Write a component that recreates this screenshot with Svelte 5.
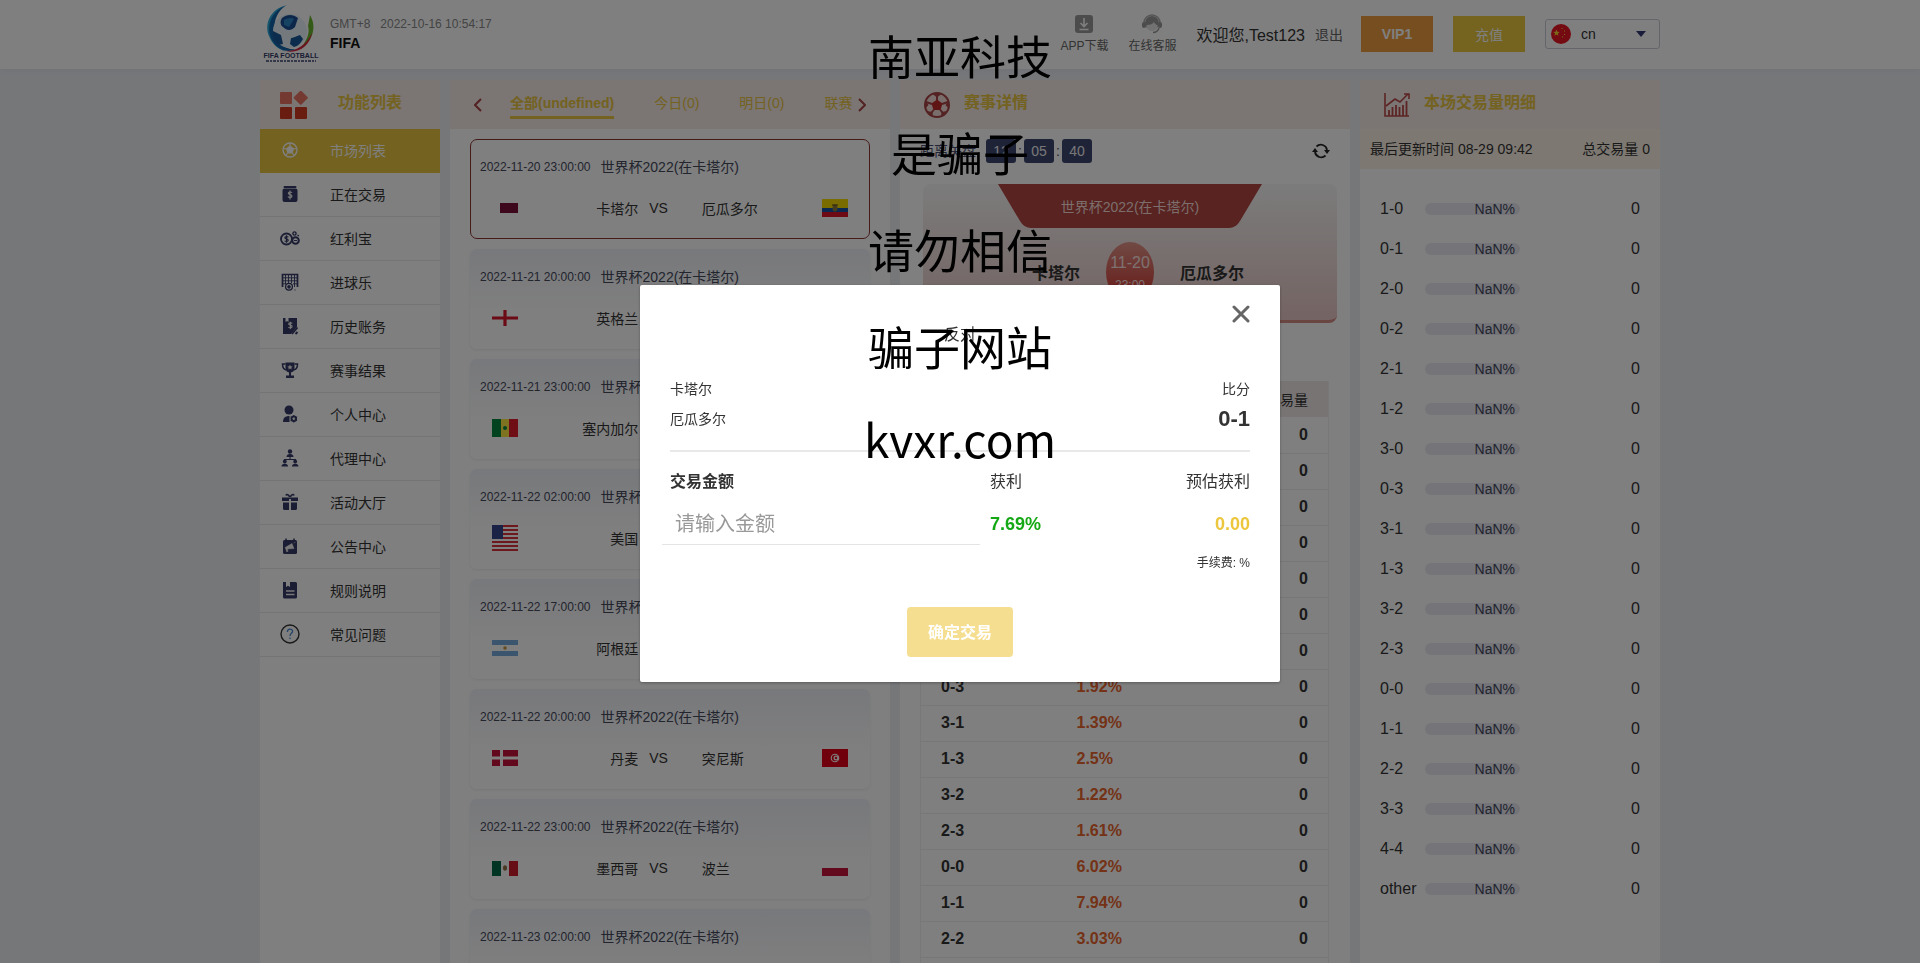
<script>
    const menu = [
        { name: "市场列表", icon: "ball" },
        { name: "正在交易", icon: "trade" },
        { name: "红利宝", icon: "coins" },
        { name: "进球乐", icon: "goal" },
        { name: "历史账务", icon: "history" },
        { name: "赛事结果", icon: "cup" },
        { name: "个人中心", icon: "user" },
        { name: "代理中心", icon: "agent" },
        { name: "活动大厅", icon: "gift" },
        { name: "公告中心", icon: "notice" },
        { name: "规则说明", icon: "rules" },
        { name: "常见问题", icon: "help" },
    ];

    const tabs = ["全部(undefined)", "今日(0)", "明日(0)", "联赛"];
    const league = "世界杯2022(在卡塔尔)";

    const matches = [
        { time: "2022-11-20 23:00:00", home: "卡塔尔", away: "厄瓜多尔", flags: ["qa", "ec"] },
        { time: "2022-11-21 20:00:00", home: "英格兰", away: "伊朗", flags: ["en", "ir"] },
        { time: "2022-11-21 23:00:00", home: "塞内加尔", away: "荷兰", flags: ["sn", "nl"] },
        { time: "2022-11-22 02:00:00", home: "美国", away: "威尔士", flags: ["us", "pl"] },
        { time: "2022-11-22 17:00:00", home: "阿根廷", away: "沙特阿拉伯", flags: ["ar", "ir"] },
        { time: "2022-11-22 20:00:00", home: "丹麦", away: "突尼斯", flags: ["dk", "tn"] },
        { time: "2022-11-22 23:00:00", home: "墨西哥", away: "波兰", flags: ["mx", "pl"] },
        { time: "2022-11-23 02:00:00", home: "法国", away: "澳大利亚", flags: ["nl", "en"] },
    ];

    const odds = [
        ["1-0", "7.02%"], ["0-1", "7.69%"], ["2-0", "4.12%"], ["0-2", "4.35%"],
        ["2-1", "3.26%"], ["1-2", "3.44%"], ["3-0", "1.85%"], ["0-3", "1.92%"],
        ["3-1", "1.39%"], ["1-3", "2.5%"], ["3-2", "1.22%"], ["2-3", "1.61%"],
        ["0-0", "6.02%"], ["1-1", "7.94%"], ["2-2", "3.03%"], ["3-3", "1.05%"],
    ];

    const volumes = [
        "1-0", "0-1", "2-0", "0-2", "2-1", "1-2", "3-0", "0-3", "3-1",
        "1-3", "3-2", "2-3", "0-0", "1-1", "2-2", "3-3", "4-4", "other",
    ];

    const countdown = ["12", "05", "40"];

    let amount = "";
</script>

{#snippet icon(name)}
    <svg class="menu-icon" viewBox="0 0 20 20" aria-hidden="true">
        {#if name === "ball"}
            <circle cx="10" cy="10" r="7" fill="none" stroke="currentColor" stroke-width="1.4" />
            <path d="M10 5.6l4 3-1.5 4.8h-5L6 8.600z" fill="currentColor" />
            <path d="M10 3v3M3.500 8.500l3 .5M16.500 8.500l-3 .5M6 15.500l1.500-2.500M14 15.500l-1.500-2.500" stroke="currentColor" stroke-width="1.2" />
        {:else if name === "trade"}
            <rect x="3.500" y="2" width="13" height="2" rx="1" fill="currentColor" />
            <rect x="2.500" y="4.500" width="15" height="13.500" rx="2" fill="currentColor" />
            <path d="M12 8.700c-.5-.9-3.600-1.200-3.700.6 0 1.700 3.700.9 3.600 2.800-.1 1.800-3.200 1.700-3.900.4M10 6.600v8.800" fill="none" stroke="#eee" stroke-width="1.2" />
        {:else if name === "coins"}
            <circle cx="6.500" cy="11" r="5.500" fill="none" stroke="currentColor" stroke-width="1.8" />
            <path d="M8.300 9.300c-.6-1-3.400-1-3.400.4s3.300.9 3.300 2.500-2.800 1.600-3.500.5M6.500 7.300v7.500" fill="none" stroke="currentColor" stroke-width="1.2" />
            <circle cx="15.500" cy="12.500" r="3.300" fill="none" stroke="currentColor" stroke-width="2" />
            <circle cx="14.500" cy="5.500" r="1.600" fill="none" stroke="currentColor" stroke-width="1.4" />
            <path d="M14 12.500h3M17.500 7l1.500 1" stroke="currentColor" stroke-width="1.2" />
        {:else if name === "goal"}
            <path d="M2.500 15V2.500h15V15" fill="none" stroke="currentColor" stroke-width="1.700" />
            <path d="M5.500 3v9M8.500 3v8M11.500 3v8M14.500 3v12M3 5.800h14M3 8.800h14M3 11.800h3M13 11.800h4" stroke="currentColor" stroke-width=".9" />
            <circle cx="9" cy="14.800" r="3.400" fill="none" stroke="currentColor" stroke-width="1.300" />
            <path d="M9 13l1.600 1.200-.6 2H8l-.6-2zM14 18h2" fill="currentColor" stroke="currentColor" stroke-width=".5" />
        {:else if name === "history"}
            <path d="M3 2h2.500v4L7 5l1.500 1V2H17v9l-6 7H3z" fill="currentColor" />
            <path d="M12.200 7.500c-.6-1-3.600-1-3.500.5 0 1.600 3.500.8 3.400 2.600 0 1.700-3 1.500-3.600.4M10.400 5.800V13" fill="none" stroke="#eee" stroke-width="1.200" />
            <path d="M17.500 11.500L12 18M17.500 16l-2 2" stroke="currentColor" stroke-width="1.800" />
        {:else if name === "cup"}
            <path d="M5.500 2.500h9v5.500c0 3-2 4.500-4.500 4.500S5.500 11 5.500 8z" fill="currentColor" />
            <path d="M5.500 4H2.500c0 4 1 5.500 4 6M14.500 4h3c0 4-1 5.500-4 6" fill="none" stroke="currentColor" stroke-width="1.500" />
            <path d="M9 12h2v3.500h3V18H6v-2.500h3z" fill="currentColor" />
            <path d="M10 4.500l.8 1.700 1.800.2-1.300 1.300.3 1.800-1.600-.9-1.600.9.3-1.800-1.300-1.300 1.800-.2z" fill="#eee" />
        {:else if name === "user"}
            <circle cx="9" cy="6" r="4.500" fill="currentColor" />
            <path d="M3 18c0-4 2-6 6.500-6v6z" fill="currentColor" />
            <circle cx="13.800" cy="14.800" r="2.300" fill="none" stroke="currentColor" stroke-width="1.900" />
            <path d="M13.800 11v7.600M10.500 13l6.600 3.700M17.100 13l-6.600 3.700" stroke="currentColor" stroke-width="1" />
            <circle cx="13.800" cy="14.800" r="1.200" fill="#eee" />
        {:else if name === "agent"}
            <circle cx="10" cy="3.500" r="2.200" fill="currentColor" />
            <path d="M6.500 9c0-2 1.500-3 3.500-3s3.500 1 3.500 3z" fill="currentColor" />
            <path d="M10 9v3M4.500 13v-1.500h11V13" fill="none" stroke="currentColor" stroke-width="1.100" />
            <circle cx="4.800" cy="13.500" r="1.900" fill="currentColor" />
            <circle cx="15.200" cy="13.500" r="1.900" fill="currentColor" />
            <path d="M1.500 18.500c0-2 1.300-2.800 3.300-2.800S8 16.500 8 18.500zM12 18.500c0-2 1.300-2.800 3.200-2.800s3.300.8 3.300 2.800z" fill="currentColor" />
        {:else if name === "gift"}
            <path d="M2 5.500h16V9h-7V7H9v2H2zM3 10.500h6V18H4.500Q3 18 3 16.500zM11 10.500h6v6q0 1.500-1.500 1.500H11z" fill="currentColor" />
            <path d="M9.500 5C9 2.500 6.500 2 6 3.500M10.500 5c.5-2.500 3-3 3.500-1.500" fill="none" stroke="currentColor" stroke-width="1.600" />
        {:else if name === "notice"}
            <rect x="3" y="4" width="14" height="14" rx="1.500" fill="currentColor" />
            <path d="M6 2.500v3M14 2.500v3" stroke="currentColor" stroke-width="1.500" />
            <path d="M5 11.500l7-4 2 5-6.500.5.500 2.500H6.500L6 13.500zM13.500 7l2-.8" fill="#eee" stroke="#eee" stroke-width=".5" />
        {:else if name === "rules"}
            <path d="M3 2h3v5l2-1.200L10 7V2h5.500Q17 2 17 3.500V17q0 1.500-1.500 1.500h-11Q3 18.500 3 17z" fill="currentColor" />
            <path d="M6 11h8.500M6 14.500h8.500" stroke="#eee" stroke-width="1.300" />
        {:else}
            <circle cx="10" cy="10" r="9" fill="none" stroke="#333" stroke-width="1.400" />
            <path d="M7.400 8c0-4 5.400-3.600 5.200-.6-.1 2-2.600 2-2.600 4.600M10 13.500v1.500" fill="none" stroke="#4a86cf" stroke-width="1.300" />
        {/if}
    </svg>
{/snippet}

{#snippet flag(code)}
    {#if code === "us"}
        <svg class="flag" viewBox="0 0 26 26" aria-hidden="true">
            <rect width="26" height="26" fill="#fff" />
            <path d="M0 1h26M0 5h26M0 9h26M0 13h26M0 17h26M0 21h26M0 25h26" stroke="#d8303a" stroke-width="2" />
            <rect width="11" height="14" fill="#34478c" />
        </svg>
    {:else}
        <svg class="flag" viewBox="0 0 26 18" aria-hidden="true">
            {#if code === "qa"}
                <path d="M8 4h18v10H8z" fill="#7c1038" />
            {:else if code === "ec"}
                <rect width="26" height="9" fill="#f6d800" />
                <rect y="9" width="26" height="5" fill="#1450a4" />
                <rect y="13" width="26" height="5" fill="#dc1428" />
                <ellipse cx="13" cy="9" rx="2.500" ry="3.500" fill="#8a7a3c" />
                <path d="M10 6h6" stroke="#554422" />
            {:else if code === "en"}
                <rect y="1" width="26" height="16" fill="#fff" />
                <path d="M0 9h26M13 1v16" stroke="#d8142c" stroke-width="3.200" />
            {:else if code === "sn"}
                <rect width="9" height="18" fill="#00863d" />
                <rect x="9" width="8" height="18" fill="#fbe642" />
                <rect x="17" width="9" height="18" fill="#de1c28" />
                <circle cx="13" cy="9" r="2" fill="#00863d" />
            {:else if code === "ar"}
                <rect y="1" width="26" height="16" fill="#fff" />
                <path d="M0 3.500h26M0 14.500h26" stroke="#75aadb" stroke-width="5" />
                <circle cx="13" cy="9" r="1.800" fill="#c99a3b" />
            {:else if code === "dk"}
                <rect y="1" width="26" height="16" fill="#c4123a" />
                <path d="M0 9h26M9.500 1v16" stroke="#fff" stroke-width="3" />
            {:else if code === "tn"}
                <rect width="26" height="18" fill="#e00016" />
                <circle cx="13" cy="9" r="4.300" fill="#fff" />
                <circle cx="13" cy="9" r="3.200" fill="#e00016" />
                <circle cx="14" cy="9" r="2.500" fill="#fff" />
                <circle cx="14" cy="9" r="1.200" fill="#e00016" />
            {:else if code === "mx"}
                <rect y="2" width="9" height="15" fill="#006b48" />
                <rect x="9" y="2" width="8" height="15" fill="#fff" />
                <rect x="17" y="2" width="9" height="15" fill="#ce1a2b" />
                <ellipse cx="13" cy="9" rx="2" ry="2.800" fill="#8f6f42" />
            {:else if code === "pl"}
                <rect y="1" width="26" height="8" fill="#fff" />
                <rect y="9" width="26" height="8" fill="#c8143c" />
            {:else}
                <rect width="26" height="6" fill="#b32134" />
                <rect y="6" width="26" height="6" fill="#fff" />
                <rect y="12" width="26" height="6" fill="#21468b" />
            {/if}
        </svg>
    {/if}
{/snippet}

<div class="app">
    <header>
        <div class="wrap header-inner">
            <svg class="logo" viewBox="0 0 62 60" role="img" aria-label="FIFA FOOTBALL">
                <path d="M27 1C10 5 4 20 9 32c3 8 9 13 17 16C14 42 9 32 11 22 13 12 19 5 27 1z" fill="#29a8d8" />
                <path d="M25 2C12 12 11 30 22 41c4 3 9 5 14 4-7 4-17 2-23-7C5 25 10 8 25 2z" fill="#1565a8" />
                <circle cx="30" cy="27" r="17" fill="#e8f3fa" />
                <path d="M22 14c5-4 11-4 16 0l-3 9c-4 4-8 4-12 0-3-2-3-6-1-9z" fill="#1a4f97" />
                <path d="M13 27l8 4 2 9-5 1c-4-4-6-8-5-14zM31 34l9-3 3 4c-2 4-5 7-9 8l-4-3z" fill="#17599b" />
                <path d="M24 16c3-2 7-3 10-1l-5 8-5-2z" fill="#2e86c5" />
                <path d="M20 20c3 8 14 12 25 2-3 9-12 14-20 11-5-2-6-8-5-13z" fill="#e8f3fa" />
                <path d="M50 11c7 12 3 25-8 32 5-8 8-14 6-21z" fill="#69b52e" />
                <path d="M52 29c-2 13-14 21-26 18 11 0 20-6 26-18z" fill="#d0263c" />
                <text x="31" y="54" class="logo-name">FIFA FOOTBALL</text>
                <path d="M6 57h50" stroke="#3a4170" stroke-width="1.500" stroke-dasharray="3 1 2 1" />
            </svg>
            <div class="brand">
                <div class="clock"><span>GMT+8</span><time>2022-10-16 10:54:17</time></div>
                <strong>FIFA</strong>
            </div>
            <nav class="tools">
                <a href="#app">
                    <svg viewBox="0 0 20 20" aria-hidden="true">
                        <rect x="1" y="1" width="18" height="18" rx="3" fill="#999" />
                        <path d="M10 4v8M6.500 9l3.500 3.500L13.500 9M5.500 15.500h9" fill="none" stroke="#fff" stroke-width="1.600" />
                    </svg>
                    APP下载
                </a>
                <a href="#service">
                    <svg viewBox="0 0 20 20" aria-hidden="true">
                        <path d="M2 9a8 8 0 0 1 16 0" fill="none" stroke="#aaa" stroke-width="1.500" />
                        <rect y="8" width="4" height="6" rx="2" fill="#999" />
                        <rect x="16" y="8" width="4" height="6" rx="2" fill="#999" />
                        <circle cx="10" cy="9" r="7" fill="#999" />
                        <path d="M4.500 11c4 0 6.500-1 7.500-3 1 2 2 3 3.500 3 0 8-11 8-11 0z" fill="#e4e4e4" />
                        <path d="M17 14c-1 3-3 4.500-6 4.500" fill="none" stroke="#999" stroke-width="1.500" />
                    </svg>
                    在线客服
                </a>
            </nav>
            <span class="welcome">欢迎您,Test123</span>
            <button class="logout">退出</button>
            <button class="pill vip">VIP1</button>
            <button class="pill charge">充值</button>
            <div class="lang">
                <svg class="cn-flag" viewBox="0 0 20 20" aria-hidden="true">
                    <circle cx="10" cy="10" r="10" fill="#e81424" />
                    <path d="M5.500 5.500l.9 2.200 2.300.2-1.800 1.500.6 2.300-2-1.200-2 1.200.6-2.300-1.800-1.500 2.300-.2z" fill="#f8d030" />
                    <path d="M10.500 4.500h1M13 7h1M13 10.500h1M11 13h1" stroke="#f8d030" stroke-width="1.200" />
                </svg>
                <select aria-label="语言"><option>cn</option></select>
                <svg class="caret" viewBox="0 0 10 6" aria-hidden="true"><path d="M0 0h10L5 6z" fill="#343a72" /></svg>
            </div>
        </div>
    </header>

    <main class="wrap">
        <aside class="panel">
            <div class="panel-head side-head">
                <svg viewBox="0 0 28 28" aria-hidden="true">
                    <rect y="1" width="12" height="12" rx="1" fill="#e87362" />
                    <rect x="15.500" y="1.500" width="10.500" height="10.500" rx="1" fill="#e87362" transform="rotate(45 20.750 6.750)" />
                    <rect y="16" width="12" height="12" rx="1" fill="#d13a20" />
                    <rect x="15" y="16" width="12" height="12" rx="1" fill="#d13a20" />
                </svg>
                <h2>功能列表</h2>
            </div>
            <ul class="menu">
                {#each menu as item, i}
                    <li>
                        <a href="#{item.icon}" class:active={i === 0}>
                            {@render icon(item.icon)}
                            {item.name}
                        </a>
                    </li>
                {/each}
            </ul>
        </aside>

        <section class="panel">
            <div class="panel-head tabs-head">
                <button class="arrow" aria-label="上一页">
                    <svg viewBox="0 0 8 14" aria-hidden="true"><path d="M7 1L1 7l6 6" /></svg>
                </button>
                <div class="tabs">
                    {#each tabs as tab, i}
                        <button class="tab" class:active={i === 0}>{tab}</button>
                    {/each}
                </div>
                <button class="arrow" aria-label="下一页">
                    <svg viewBox="0 0 8 14" aria-hidden="true"><path d="M1 1l6 6-6 6" /></svg>
                </button>
            </div>
            <div class="matches">
                {#each matches as match, i}
                    <article class="match" class:selected={i === 0}>
                        <div class="match-top"><time>{match.time}</time><span>{league}</span></div>
                        <div class="teams">
                            {@render flag(match.flags[0])}
                            <span class="home">{match.home}</span>
                            <span>VS</span>
                            <span class="away">{match.away}</span>
                            {@render flag(match.flags[1])}
                        </div>
                    </article>
                {/each}
            </div>
        </section>

        <section class="panel">
            <div class="panel-head detail-head">
                <svg viewBox="0 0 26 26" aria-hidden="true">
                    <circle cx="13" cy="13" r="12" fill="#f3dcd9" stroke="#a84444" stroke-width="2" />
                    <path d="M13 7.500l5.500 4-2 6.500h-7l-2-6.500z" fill="#c02a2a" />
                    <path d="M13 1v7M2 10l6 2M24 10l-6 2M6 22.500l4-5M20 22.500l-4-5" stroke="#a84444" stroke-width="2" />
                    <path d="M8 1.500h10l-5 4zM1 8v9l3.500-4zM25 8v9l-3.500-4zM3 19l6 6-.5-5zM23 19l-6 6 .5-5z" fill="#a84444" />
                </svg>
                <h2>赛事详情</h2>
            </div>
            <div class="countdown">
                <span class="count-label">距离关盘</span>
                {#each countdown as part, i}
                    {#if i > 0}<span class="colon">:</span>{/if}
                    <b>{part}</b>
                {/each}
                <button class="refresh" aria-label="刷新">
                    <svg viewBox="0 0 18 18" aria-hidden="true">
                        <path d="M3 10a6.200 6.200 0 0 0 10.500 3.500M15 8A6.200 6.200 0 0 0 4.500 4.500" fill="none" stroke="#222" stroke-width="1.800" />
                        <path d="M0 10l3-4 3 4zM12 8l3 4 3-4z" fill="#222" />
                    </svg>
                </button>
            </div>
            <div class="versus">
                <div class="ribbon">
                    <svg viewBox="0 0 264 44" preserveAspectRatio="none" aria-hidden="true">
                        <path d="M0 0h264l-22 37q-4 7-11 7H33q-7 0-11-7z" fill="#b04640" />
                    </svg>
                    <span>{league}</span>
                </div>
                <div class="versus-row">
                    <strong>卡塔尔</strong>
                    <div class="kickoff"><span>11-20</span><small>23:00</small></div>
                    <strong>厄瓜多尔</strong>
                </div>
            </div>
            <table class="odds">
                <thead>
                    <tr><th>比分</th><th>获利</th><th>可交易量</th></tr>
                </thead>
                <tbody>
                    {#each odds as [score, rate]}
                        <tr><td>{score}</td><td class="rate">{rate}</td><td>0</td></tr>
                    {/each}
                </tbody>
            </table>
        </section>

        <section class="panel">
            <div class="panel-head volume-head">
                <svg viewBox="0 0 26 26" aria-hidden="true">
                    <path d="M1 1v23h24" fill="none" stroke="#b84a48" stroke-width="1.600" />
                    <path d="M2 14l9-7 5 3 8-8M20 2h5v5" fill="none" stroke="#b84a48" stroke-width="1.600" />
                    <path d="M5 24v-6M8.500 24v-9M12 24v-11M15.500 24v-9M19 24v-11M22.500 24V9" stroke="#b84a48" stroke-width="1.800" />
                </svg>
                <h2>本场交易量明细</h2>
            </div>
            <div class="updated"><span>最后更新时间 08-29 09:42</span><span>总交易量 0</span></div>
            <ul class="volumes">
                {#each volumes as score}
                    <li>
                        <span class="score">{score}</span>
                        <span class="bar">NaN%</span>
                        <span>0</span>
                    </li>
                {/each}
            </ul>
        </section>
    </main>
</div>

<div class="mask">
    <div class="modal" role="dialog" aria-modal="true" aria-labelledby="modal-title">
        <button class="close" aria-label="关闭">
            <svg viewBox="0 0 18 18" aria-hidden="true"><path d="M2 2l14 14M16 2L2 16" /></svg>
        </button>
        <h3 id="modal-title">反对</h3>
        <div class="summary">
            <div><span>卡塔尔</span><span>比分</span></div>
            <div><span>厄瓜多尔</span><b>0-1</b></div>
        </div>
        <div class="trade">
            <label for="amount">交易金额</label>
            <span>获利</span>
            <span class="right">预估获利</span>
            <input id="amount" type="text" placeholder="请输入金额" bind:value={amount} />
            <b class="profit">7.69%</b>
            <b class="right estimate">0.00</b>
        </div>
        <div class="fee">手续费: %</div>
        <button class="confirm">确定交易</button>
    </div>
</div>

<div class="warning">
    <p>南亚科技</p>
    <p>是骗子</p>
    <p>请勿相信</p>
    <p>骗子网站</p>
    <p class="site">kvxr.com</p>
</div>

<style>
    :global(body) {
        margin: 0;
        overflow: hidden;
    }

    .app,
    .mask,
    .warning {
        font-family: "Liberation Sans", "Noto Sans CJK SC", sans-serif;
        font-size: 14px;
        color: #333;
    }

    .app *,
    .mask * {
        box-sizing: border-box;
    }

    .app {
        display: flex;
        flex-direction: column;
        height: 100vh;
        overflow: hidden;
        background: #ebeef3;
    }

    button,
    input,
    select {
        font-family: inherit;
        font-size: inherit;
        color: inherit;
        background: none;
        border: 0;
        padding: 0;
    }

    a {
        color: inherit;
        text-decoration: none;
    }

    ul {
        list-style: none;
        margin: 0;
        padding: 0;
    }

    h2,
    h3,
    p {
        margin: 0;
    }

    .wrap {
        width: 100%;
        max-width: 1400px;
        margin: 0 auto;
    }

    header {
        background: #fff;
        box-shadow: 0 2px 6px rgba(80, 90, 110, 0.05);
    }

    .header-inner {
        display: flex;
        align-items: center;
        height: 69px;
        padding-bottom: 2px;
    }

    .logo {
        width: 62px;
        height: 60px;
        margin-right: 8px;
    }

    .logo-name {
        font-size: 7px;
        font-weight: bold;
        fill: #343a66;
        text-anchor: middle;
    }

    .brand {
        display: flex;
        flex-direction: column;
        gap: 3px;
        line-height: 16px;
        color: #111;
        margin-right: auto;
    }

    .clock {
        display: flex;
        gap: 10px;
        font-size: 12px;
        color: #888;
    }

    .tools {
        display: flex;
        gap: 20px;
        margin-right: 20px;
        font-size: 12px;
        line-height: 16px;
        color: #666;
    }

    .tools a {
        display: flex;
        flex-direction: column;
        align-items: center;
        gap: 4px;
    }

    .tools svg {
        width: 20px;
        height: 20px;
    }

    .welcome {
        font-size: 16px;
        margin-right: 10px;
    }

    .logout {
        color: #666;
        margin-right: 18px;
    }

    .pill {
        width: 72px;
        height: 36px;
        color: #fff;
        font-weight: bold;
        margin-right: 20px;
    }

    .vip {
        background: #ee9d3e;
    }

    .charge {
        background: #e8c840;
        font-weight: normal;
    }

    .lang {
        display: flex;
        align-items: center;
        width: 115px;
        height: 30px;
        padding: 0 5px;
        border: 1px solid #c9cbd6;
        border-radius: 3px;
    }

    .cn-flag {
        width: 20px;
        height: 20px;
    }

    .lang select {
        appearance: none;
        flex: 1;
        padding-left: 10px;
    }

    .caret {
        width: 10px;
        height: 6px;
        margin-right: 8px;
        pointer-events: none;
    }

    main {
        display: grid;
        grid-template-columns: 180px minmax(0, 44fr) minmax(0, 45fr) minmax(0, 30fr);
        gap: 10px;
        flex: 1;
        min-height: 0;
        padding-top: 11px;
        box-sizing: border-box;
    }

    .panel {
        background: #fff;
        min-height: 0;
        overflow: hidden;
    }

    .panel-head {
        display: flex;
        align-items: center;
        height: 49px;
        background: #f6ebe9;
        color: #e8c440;
    }

    .panel-head h2 {
        font-size: 16px;
        line-height: 24px;
        padding-bottom: 3px;
    }

    .side-head {
        padding-left: 20px;
        gap: 30px;
    }

    .side-head svg {
        width: 28px;
        height: 28px;
    }

    .side-head h2 {
        flex: 1;
    }

    .menu a {
        display: flex;
        align-items: center;
        gap: 30px;
        height: 44px;
        padding: 0 20px 2px;
        border-bottom: 1px solid #e8e8ec;
    }

    .menu a.active {
        background: #e8c440;
        color: #fff;
        border-color: #e8c440;
    }

    .menu-icon {
        width: 20px;
        height: 20px;
        color: #343a66;
    }

    .menu a.active .menu-icon {
        color: #fff;
    }

    .tabs-head {
        padding: 0 24px;
    }

    .arrow svg {
        display: block;
        width: 8px;
        height: 14px;
        fill: none;
        stroke: #a84444;
        stroke-width: 2;
    }

    .tabs {
        display: flex;
        flex: 1;
        gap: 40px;
        margin-left: 28px;
        overflow: hidden;
    }

    .tab {
        flex: none;
        line-height: 26px;
        border-bottom: 3px solid transparent;
    }

    .tab.active {
        font-weight: bold;
        border-color: #e8c440;
    }

    .matches {
        display: flex;
        flex-direction: column;
        gap: 10px;
        padding: 10px 20px;
    }

    .match {
        flex: none;
        height: 100px;
        padding: 16px 10px 0;
        border-radius: 7px;
        background: linear-gradient(#f0f2f8, #fefefe 60%);
        box-shadow: 0 1px 3px rgba(50, 60, 100, 0.1);
    }

    .match.selected {
        padding: 15px 9px 0;
        background: #fff;
        border: 1px solid #8e3434;
        box-shadow: none;
    }

    .match-top {
        display: flex;
        align-items: center;
        gap: 10px;
        line-height: 24px;
        color: #44485c;
    }

    .match-top time {
        font-size: 12px;
    }

    .teams {
        display: flex;
        align-items: center;
        height: 26px;
        margin-top: 16px;
        padding: 0 12px;
    }

    .flag {
        width: 26px;
        flex: none;
    }

    .home,
    .away {
        flex: 1 1 0;
        white-space: nowrap;
    }

    .home {
        text-align: right;
        margin-right: 11px;
    }

    .away {
        margin-left: 34px;
    }

    .detail-head {
        padding-left: 24px;
        gap: 14px;
    }

    .detail-head svg,
    .volume-head svg {
        width: 26px;
        height: 26px;
    }

    .countdown {
        display: flex;
        align-items: center;
        padding: 10px 20px 0;
        line-height: 24px;
        color: #444a6c;
    }

    .count-label {
        margin-right: 10px;
    }

    .countdown b {
        width: 30px;
        border-radius: 3px;
        background: #3c466e;
        color: #eee;
        font-weight: normal;
        text-align: center;
    }

    .colon {
        width: 8px;
        text-align: center;
    }

    .refresh {
        margin-left: auto;
    }

    .refresh svg {
        display: block;
        width: 18px;
        height: 18px;
    }

    .versus {
        height: 139px;
        margin: 21px 13px 0 23px;
        border-bottom: 3px solid #d48c86;
        border-radius: 8px;
        background: linear-gradient(#f8f7f7, #e8c8c6);
    }

    .ribbon {
        position: relative;
        width: 264px;
        margin: 0 auto;
        line-height: 46px;
        height: 44px;
        text-align: center;
        color: #f6dcd8;
    }

    .ribbon svg {
        position: absolute;
        inset: 0;
    }

    .ribbon span {
        position: relative;
    }

    .versus-row {
        display: grid;
        grid-template-columns: 1fr 48px 1fr;
        gap: 26px;
        align-items: center;
        margin-top: 14px;
        font-size: 16px;
    }

    .versus-row strong:first-child {
        text-align: right;
    }

    .kickoff {
        display: flex;
        flex-direction: column;
        align-items: center;
        height: 60px;
        padding-top: 10px;
        border-radius: 50%;
        background: linear-gradient(#e29488, #d0302c);
        color: #fbe4e0;
        line-height: 22px;
    }

    .kickoff small {
        font-size: 12px;
    }

    .odds {
        width: calc(100% - 41px);
        margin: 58px 21px 0 20px;
        border-collapse: collapse;
        table-layout: fixed;
        font-size: 16px;
        font-weight: bold;
    }

    .odds th {
        height: 36px;
        padding: 0 20px;
        background: #f0e9e8;
        font-size: 14px;
        font-weight: normal;
        text-align: left;
    }

    .odds td {
        height: 36px;
        padding: 0 20px;
        border-bottom: 1px solid #eeeef2;
    }

    .odds tr {
        border-left: 1px solid #f0f0f3;
        border-right: 1px solid #f0f0f3;
    }

    .odds th:last-child,
    .odds td:last-child {
        text-align: right;
    }

    .odds .rate {
        color: #e8642c;
    }

    .volume-head {
        padding-left: 24px;
        gap: 14px;
    }

    .updated {
        display: flex;
        justify-content: space-between;
        padding: 0 10px;
        line-height: 40px;
        background: #faf1e4;
    }

    .volumes {
        padding: 20px 20px 0;
    }

    .volumes li {
        display: flex;
        align-items: center;
        height: 40px;
        font-size: 16px;
    }

    .score {
        width: 45px;
    }

    .bar {
        width: 95px;
        padding-right: 5px;
        margin-right: auto;
        border-radius: 6px;
        background: #e8e9f2;
        font-size: 14px;
        line-height: 12px;
        text-align: right;
        color: #44485c;
    }

    .mask {
        position: fixed;
        inset: 0;
        padding-top: 285px;
        background: rgba(0, 0, 0, 0.5);
    }

    .modal {
        position: relative;
        display: flex;
        flex-direction: column;
        width: 640px;
        margin: 0 auto;
        padding: 30px 30px 25px;
        border-radius: 2px;
        background: #fff;
        box-shadow: 0 1px 3px rgba(0, 0, 0, 0.3);
    }

    .close {
        position: absolute;
        top: 20px;
        right: 30px;
    }

    .close svg {
        display: block;
        width: 18px;
        height: 18px;
        stroke: #666;
        stroke-width: 3;
        stroke-linecap: round;
    }

    .modal h3 {
        font-size: 16px;
        font-weight: normal;
        line-height: 40px;
        text-align: center;
    }

    .summary {
        margin-top: 19px;
        padding-bottom: 16px;
        border-bottom: 2px solid #e8e8e8;
        line-height: 30px;
        color: #333;
    }

    .summary div {
        display: flex;
        justify-content: space-between;
        height: 30px;
    }

    .summary b {
        font-size: 22px;
    }

    .trade {
        display: grid;
        grid-template-columns: 310px 1fr 1fr;
        column-gap: 10px;
        row-gap: 8px;
        align-items: center;
        margin-top: 15px;
        font-size: 16px;
        line-height: 30px;
    }

    .trade label {
        font-weight: bold;
    }

    .trade input {
        width: 318px;
        height: 40px;
        margin-left: -8px;
        padding-left: 13px;
        border-bottom: 1px solid #e4e4e4;
        font-size: 20px;
    }

    .trade input::placeholder {
        color: #999;
    }

    .trade b {
        font-size: 18px;
        padding-bottom: 2px;
    }

    .right {
        text-align: right;
    }

    .profit {
        color: #14a814;
    }

    .estimate {
        color: #ecc63c;
    }

    .fee {
        margin-top: 8px;
        font-size: 12px;
        line-height: 20px;
        text-align: right;
    }

    .confirm {
        align-self: center;
        width: 106px;
        height: 50px;
        margin-top: 34px;
        padding-bottom: 2px;
        border-radius: 4px;
        background: #f5de90;
        color: #fff;
        font-size: 16px;
        font-weight: bold;
    }

    .warning {
        position: fixed;
        top: 6px;
        left: 0;
        right: 0;
        font-family: "Noto Sans CJK SC", sans-serif;
        font-size: 46px;
        line-height: 97px;
        text-align: center;
        color: #000;
        pointer-events: none;
    }

    .warning .site {
        line-height: 88px;
    }
</style>
